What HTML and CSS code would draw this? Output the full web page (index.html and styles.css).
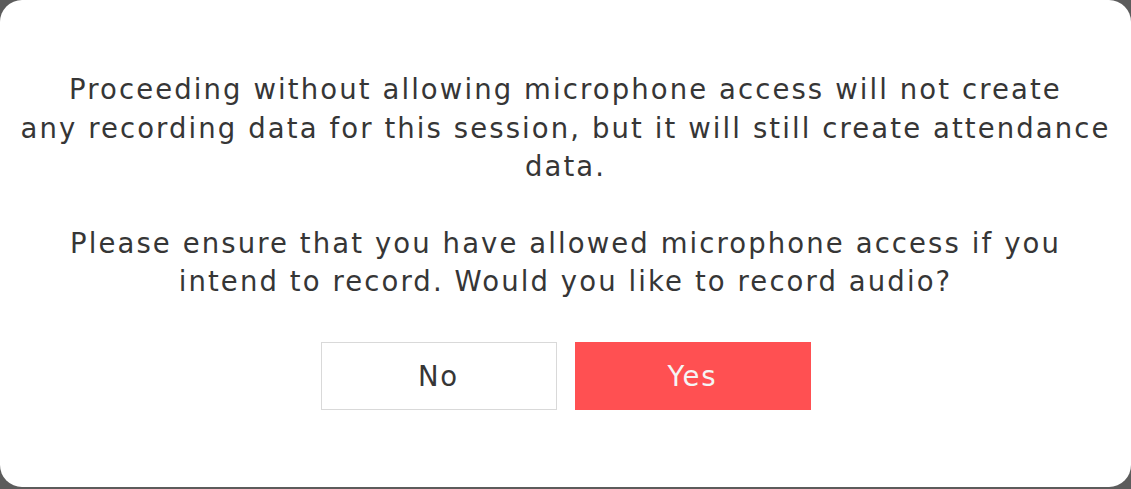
FILE: index.html
```html
<!DOCTYPE html>
<html lang="en">
<head>
<meta charset="utf-8">
<title>Record audio?</title>
<link rel="stylesheet" href="styles.css">
</head>
<body>
<div class="modal">
  <div class="message">
    <p class="para">Proceeding without allowing microphone access will not create<br>any recording data for this session, but it will still create attendance<br>data.</p>
    <p class="para">Please ensure that you have allowed microphone access if you<br>intend to record. Would you like to record audio?</p>
  </div>
  <div class="actions">
    <button class="btn btn-no" type="button">No</button>
    <button class="btn btn-yes" type="button">Yes</button>
  </div>
</div>
</body>
</html>
```
FILE: styles.css
```css
html, body {
  margin: 0;
  padding: 0;
  background: #5c5c5c;
  height: 100%;
}
body {
  font-family: "DejaVu Sans", "Open Sans", sans-serif;
  color: #363636;
}
.modal {
  box-sizing: border-box;
  width: 1131px;
  height: 487px;
  background: #ffffff;
  border-radius: 22px;
  padding: 70px 18px 0;
  display: flex;
  flex-direction: column;
  align-items: center;
}
.message {
  width: 100%;
  text-align: center;
  font-size: 27.5px;
  letter-spacing: 2.1px;
  line-height: 38.5px;
  white-space: nowrap;
}
.para {
  margin: 0 0 38px;
}
.para:last-child {
  margin-bottom: 0;
}
.actions {
  display: flex;
  gap: 18px;
  margin-top: 41px;
}
.btn {
  box-sizing: border-box;
  width: 236px;
  height: 68px;
  font-family: inherit;
  font-size: 27.5px;
  letter-spacing: 1.8px;
  border-radius: 0;
  cursor: pointer;
}
.btn-no {
  background: #ffffff;
  border: 1px solid #d9d9d9;
  color: #363636;
}
.btn-yes {
  background: #ff5052;
  border: 1px solid #ff5052;
  color: #f5f5f5;
}
```
